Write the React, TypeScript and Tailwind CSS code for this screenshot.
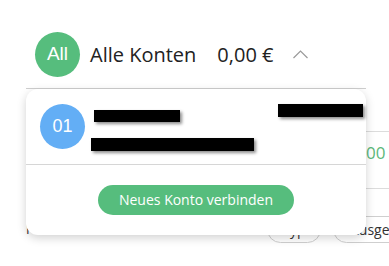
import React from "react";

const redact = "bg-black shadow-[2px_2px_3px_rgba(0,0,0,0.45)]";

export default function App() {
  return (
    <div className="relative w-[389px] h-[266px] bg-white overflow-hidden font-['Open_Sans',sans-serif] text-[#222]">
      {/* Header */}
      <div className="flex items-center pl-[35px] pt-[32px]">
        <div className="w-[45px] h-[45px] rounded-full bg-[#56bd7d] flex items-center justify-center text-white text-[19px] font-['Liberation_Sans',sans-serif]">
          All
        </div>
        <div className="ml-[10px] text-[20px] leading-none">Alle Konten</div>
        <div className="ml-[21px] text-[20px] leading-none">0,00 €</div>
        <svg className="ml-[20px]" width="15" height="9" viewBox="0 0 15 9">
          <path d="M0.5 8 L7.5 1 L14.5 8" fill="none" stroke="#9a9a9a" strokeWidth="1.2" />
        </svg>
      </div>

      {/* Background page content */}
      <div className="ml-[26px] mt-[12px] w-[440px]">
        <div className="h-[43px] border-b border-[#dcdcdc]" />
        <div className="h-[57px] border-b border-[#dcdcdc] flex items-start pt-[8px] pl-[326px]">
          <span className="text-[17px] text-[#5cb87a] whitespace-nowrap">0,00 €</span>
        </div>
        <div className="flex items-center mt-[27px] h-[27px]">
          <div className="w-[241px] text-[13px] text-[#333]">Filter</div>
          <div className="flex gap-[12px]">
            <div className="w-[54px] h-[27px] rounded-full border border-[#cfcfcf] flex items-center justify-center text-[14px] text-[#333]">Typ</div>
            <div className="w-[100px] h-[27px] rounded-full border border-[#cfcfcf] flex items-center pl-[16px] text-[14px] text-[#333] whitespace-nowrap">Ausgeben</div>
          </div>
        </div>
      </div>

      {/* Dropdown popup */}
      <div className="absolute left-[26px] top-[88px] w-[340px] flex flex-col">
        <div className="h-px bg-[#cfcfcf]" />
        <div className="h-[146px] bg-white rounded-[12px] shadow-[0_3px_10px_rgba(0,0,0,0.18)] flex flex-col">
          <div className="h-[76px] flex items-center pl-[14px] pr-[3px] border-b border-[#d6d6d6]">
            <div className="w-[45px] h-[45px] rounded-full bg-[#63aef5] flex items-center justify-center text-white text-[18px] font-['Liberation_Sans',sans-serif]">
              01
            </div>
            <div className="self-start mt-[21px] ml-[6px] flex flex-col items-start gap-[16px]">
              <div className={"ml-[3px] w-[86px] h-[12px] " + redact} />
              <div className={"w-[163px] h-[13px] " + redact} />
            </div>
            <div className={"self-start mt-[15px] ml-auto w-[85px] h-[13px] " + redact} />
          </div>
          <div className="flex-1 flex items-center justify-center">
            <button className="w-[196px] h-[30px] rounded-full bg-[#56bd7d] text-white text-[14px] leading-none">
              Neues Konto verbinden
            </button>
          </div>
        </div>
      </div>
    </div>
  );
}
